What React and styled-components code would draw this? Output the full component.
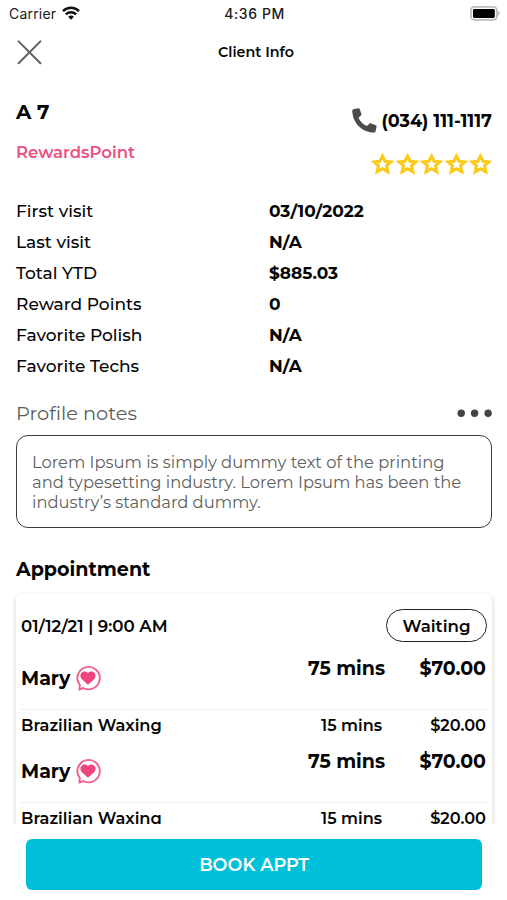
import React from 'react';
import styled, { createGlobalStyle } from 'styled-components';

const GlobalStyle = createGlobalStyle`
  *, *::before, *::after { box-sizing: border-box; }
  body { margin: 0; background: #fff; color: #050505; font-family: Montserrat, Inter, "Open Sans", sans-serif; }
`;

const Screen = styled.div`
  display: flex;
  flex-direction: column;
  height: 900px;
  overflow: hidden;
  background: #fff;
`;

const Text = styled.span`
  display: block;
  white-space: nowrap;
  font-size: ${(p) => p.$size || 16.4}px;
  font-weight: ${(p) => p.$weight || 600};
  color: ${(p) => p.$color || 'inherit'};
  line-height: ${(p) => p.$line || 20}px;
`;

const SystemText = styled(Text)`
  font-family: Inter, sans-serif;
  letter-spacing: ${(p) => p.$track}px;
`;

const StatusBar = styled.div`
  display: grid;
  grid-template-columns: 1fr auto 1fr;
  align-items: center;
  height: 28px;
  padding: 0 7px 0 9px;
  color: #1a1a1a;
`;

const Carrier = styled.div`
  display: flex;
  align-items: center;
  gap: 6px;
  svg { display: block; margin-top: -2px; }
`;

const Battery = styled.svg`
  display: block;
  justify-self: end;
  margin-top: -2px;
`;

const Header = styled.header`
  display: grid;
  grid-template-columns: 1fr auto 1fr;
  align-items: center;
  height: 49px;
  padding: 0 12px 0 17px;
`;

const HeaderTitle = styled.div`
  padding-bottom: 2px;
`;

const CloseButton = styled.button`
  display: block;
  width: 25px;
  height: 25px;
  padding: 0;
  border: 0;
  background: none;
  svg { display: block; }
`;

const Content = styled.main`
  flex: 1;
  min-height: 0;
  overflow: hidden;
  padding: 0 15px 0 16px;
`;

const Client = styled.section`
  display: flex;
  justify-content: space-between;
  height: 118px;
`;

const ClientName = styled.div`
  display: flex;
  flex-direction: column;
  gap: 20px;
  padding-top: 25px;
`;

const ClientContact = styled.div`
  display: flex;
  flex-direction: column;
  align-items: flex-end;
  gap: 20px;
  padding-top: 31px;
`;

const Phone = styled.div`
  display: flex;
  align-items: center;
  gap: 4px;
  height: 25px;
`;

const Stars = styled.div`
  display: flex;
  gap: 1.4px;
  svg { display: block; }
`;

const Facts = styled.dl`
  display: grid;
  grid-template-columns: 253px 1fr;
  grid-auto-rows: 31px;
  align-items: center;
  margin: 0;
  dt, dd { margin: 0; padding-top: 1px; }
`;

const NotesHead = styled.div`
  display: flex;
  align-items: center;
  justify-content: space-between;
  height: 54px;
  padding-top: 10px;
`;

const NotesBox = styled.div`
  width: 476px;
  height: 93px;
  padding: 16px 15px;
  border: 1.5px solid #3a3a3a;
  border-radius: 12px;
`;

const Title = styled.h2`
  display: flex;
  align-items: center;
  height: 66px;
  margin: 0;
  padding-top: 18px;
`;

const Card = styled.section`
  width: 476px;
  height: 300px;
  padding: 0 4px;
  border-radius: 5px;
  background: #fff;
  box-shadow: 0 2px 5px rgba(0, 0, 0, 0.2);
`;

const CardHead = styled.div`
  display: flex;
  align-items: center;
  justify-content: space-between;
  height: 63px;
  padding: 0 1px 0 1px;
`;

const Status = styled.div`
  display: flex;
  align-items: center;
  justify-content: center;
  width: 101px;
  height: 33px;
  border: 1.4px solid #222;
  border-radius: 17px;
`;

const Staff = styled.div`
  display: grid;
  grid-template-columns: 1fr 90px 101px;
  height: 53px;
  padding: 0 2px 0 1px;
  border-bottom: 1px solid #efefef;
`;

const StaffName = styled.div`
  display: flex;
  align-items: center;
  gap: 5px;
  height: 28px;
  margin-top: 7px;
  span { padding-top: 1px; }
`;

const Service = styled.div`
  display: grid;
  grid-template-columns: 1fr 90px 104px;
  align-items: center;
  height: 40px;
  padding: 0 2px 11px 1px;
`;

const Cell = styled.div`
  display: flex;
  justify-content: flex-end;
`;

const Footer = styled.footer`
  height: 76px;
  padding: 15px 25px 0 26px;
`;

const BookButton = styled.button`
  display: flex;
  align-items: center;
  justify-content: center;
  width: 100%;
  height: 51px;
  padding: 0;
  border: 0;
  border-radius: 6px;
  background: #00bfd9;
  color: #fff;
  font-family: inherit;
`;

const WifiIcon = () => (
  <svg width="18" height="14" viewBox="0 0 18 14" fill="none" stroke="#111" strokeWidth="2.4">
    <path d="M1 5.1C5.5.6 12.5.6 17 5.1" />
    <path d="M3.8 8.4c3-2.8 7.4-2.8 10.4 0" />
    <path d="M6.1 10.7c1.6-1.5 4.2-1.5 5.8 0L9 13.7z" fill="#111" stroke="none" />
  </svg>
);

const BatteryIcon = () => (
  <Battery width="30" height="15" viewBox="0 0 30 15">
    <rect x="0.9" y="0.9" width="26" height="13" rx="3.6" fill="#fff" stroke="#bdbdbd" strokeWidth="1.8" />
    <rect x="3" y="2.9" width="21.8" height="9" rx="1.3" fill="#000" />
    <path d="M28 5v4.6c1.1-.4 1.7-1.3 1.7-2.3S29.1 5.4 28 5z" fill="#bdbdbd" />
  </Battery>
);

const CloseIcon = () => (
  <svg width="25" height="25" viewBox="0 0 25 25" stroke="#606060" strokeWidth="2" strokeLinecap="round">
    <path d="M1.6 1.4 23.4 23.2M23.4 1.4 1.6 23.2" />
  </svg>
);

const PhoneIcon = () => (
  <svg width="25" height="25" viewBox="0 0 25 25" fill="#4b4b4b">
    <path d="M1.3 1.2 6.3.3c.6-.1 1.2.2 1.4.8l1.7 5c.2.6 0 1.100-.4 1.500L6.500 9.700c1.700 3.700 4.800 6.700 8.600 8.400l2.100-2.400c.4-.5 1-.6 1.500-.4l5.100 1.900c.6.2.9.8.8 1.400l-1.100 4.900c-.1.6-.6 1-1.200 1C10.300 24.500.3 14.800.3 2.400c0-.6.4-1.100 1-1.200z" />
  </svg>
);

const StarIcon = () => (
  <svg width="23" height="22" viewBox="0 0 23 22">
    <path
      d="M11.5 3.1 14.1 8.200 20 8.900 15.600 12.700 16.800 18.700 11.500 15.700 6.200 18.700 7.400 12.700 3 8.900 8.900 8.200z"
      fill="none" stroke="#fdc816" strokeWidth="3.100"
    />
  </svg>
);

const HeartBubble = () => (
  <svg width="26" height="26" viewBox="0 0 26 26">
    <path d="M4.900 20.200A11.200 11.200 0 1 1 8.300 23L4.300 24.600z" fill="none" stroke="#f0618c" strokeWidth="1.900" strokeLinejoin="round" />
    <path d="M13 19.700 6.700 14C4.300 11.200 5.600 6.800 9.200 6.500c1.700-.1 3.100.6 3.800 1.700.7-1.100 2.100-1.800 3.800-1.700 3.600.3 4.900 4.700 2.500 7.500z" fill="#f0457c" />
  </svg>
);

const DotsIcon = () => (
  <svg width="35" height="9" viewBox="0 0 35 9" fill="#444">
    <circle cx="4.200" cy="4.300" r="3.700" />
    <circle cx="17.600" cy="4.300" r="3.700" />
    <circle cx="31.100" cy="4.300" r="3.700" />
  </svg>
);

const facts = [
  ['First visit', '03/10/2022'],
  ['Last visit', 'N/A'],
  ['Total YTD', '$885.03'],
  ['Reward Points', '0'],
  ['Favorite Polish', 'N/A'],
  ['Favorite Techs', 'N/A'],
];

const notes = [
  'Lorem Ipsum is simply dummy text of the printing',
  'and typesetting industry. Lorem Ipsum has been the',
  'industry’s standard dummy.',
];

const Booking = () => (
  <>
    <Staff>
      <StaffName>
        <Text $size={19} $weight={700}>Mary</Text>
        <HeartBubble />
      </StaffName>
      <Cell><Text $size={19} $weight={700} $line={24}>75 mins</Text></Cell>
      <Cell><Text $size={19} $weight={700} $line={24}>$70.00</Text></Cell>
    </Staff>
    <Service>
      <Text $size={16.3}>Brazilian Waxing</Text>
      <Cell><Text $size={16.1}>15 mins</Text></Cell>
      <Cell><Text $size={16.2}>$20.00</Text></Cell>
    </Service>
  </>
);

export default function App() {
  return (
    <Screen>
      <GlobalStyle />
      <StatusBar>
        <Carrier>
          <SystemText $size={14} $weight={400} $track={0.2}>Carrier</SystemText>
          <WifiIcon />
        </Carrier>
        <SystemText $size={14} $weight={500} $track={0.6}>4:36 PM</SystemText>
        <BatteryIcon />
      </StatusBar>
      <Header>
        <CloseButton aria-label="Close"><CloseIcon /></CloseButton>
        <HeaderTitle><Text $size={14.3}>Client Info</Text></HeaderTitle>
      </Header>
      <Content>
        <Client>
          <ClientName>
            <Text $size={20} $weight={700}>A 7</Text>
            <Text $size={16.5} $color="#ec5081">RewardsPoint</Text>
          </ClientName>
          <ClientContact>
            <Phone>
              <PhoneIcon />
              <Text $size={17.6} $weight={700}>(034) 111-1117</Text>
            </Phone>
            <Stars>
              {[1, 2, 3, 4, 5].map((n) => <StarIcon key={n} />)}
            </Stars>
          </ClientContact>
        </Client>
        <Facts>
          {facts.map(([label, value]) => (
            <React.Fragment key={label}>
              <dt><Text $size={17.05} $weight={500}>{label}</Text></dt>
              <dd><Text $size={17} $weight={700}>{value}</Text></dd>
            </React.Fragment>
          ))}
        </Facts>
        <NotesHead>
          <Text $size={19.4} $weight={400} $color="#5c5c5c">Profile notes</Text>
          <DotsIcon />
        </NotesHead>
        <NotesBox>
          {notes.map((line) => (
            <Text key={line} $size={16.35} $weight={400} $color="#606060">{line}</Text>
          ))}
        </NotesBox>
        <Title><Text $size={19.1} $weight={700}>Appointment</Text></Title>
        <Card>
          <CardHead>
            <Text $size={16.65}>01/12/21 | 9:00 AM</Text>
            <Status><Text $size={16.65}>Waiting</Text></Status>
          </CardHead>
          <Booking />
          <Booking />
        </Card>
      </Content>
      <Footer>
        <BookButton><Text $size={17.7}>BOOK APPT</Text></BookButton>
      </Footer>
    </Screen>
  );
}
